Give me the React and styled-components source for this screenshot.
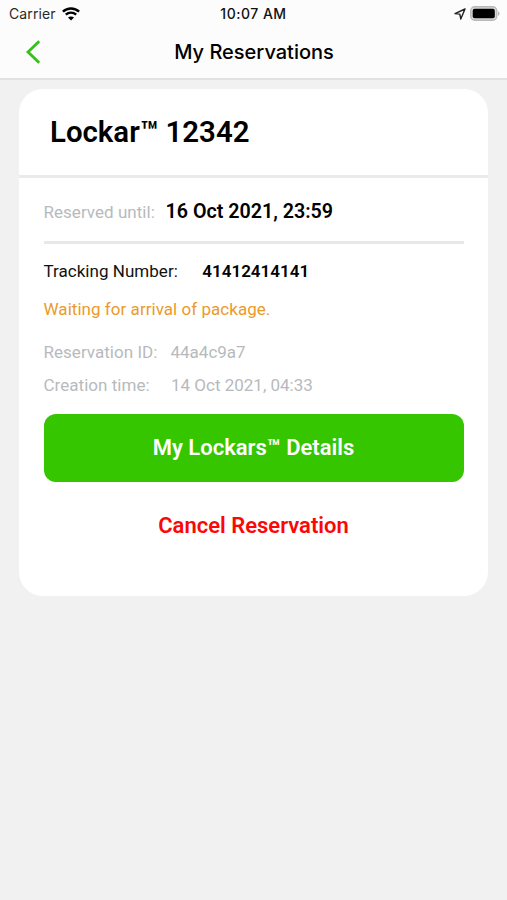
import styled, { createGlobalStyle } from 'styled-components'
import React from 'react'

const GlobalStyle = createGlobalStyle`
  * {
    box-sizing: border-box;
  }
  body {
    margin: 0;
    background: #f1f1f1;
    font-family: Roboto, "Liberation Sans", sans-serif;
    color: #000;
  }
`

const Screen = styled.div`
  min-height: 900px;
  background: #f1f1f1;
`

const TopArea = styled.header`
  height: 80px;
  background: #fcfcfc;
  border-bottom: 2px solid #e2e2e2;
  font-family: Inter, "Liberation Sans", sans-serif;
`

const StatusBar = styled.div`
  display: grid;
  grid-template-columns: 1fr auto 1fr;
  align-items: center;
  height: 26px;
  padding: 1px 7px 0 9px;
`

const Carrier = styled.div`
  display: flex;
  align-items: center;
  gap: 6px;
  font-size: 14px;
  letter-spacing: 0.1px;
  color: #2a2a2a;
`

const Clock = styled.div`
  margin-right: 2px;
  font-size: 14px;
  font-weight: 500;
  letter-spacing: 0.5px;
  color: #111;
`

const StatusIcons = styled.div`
  display: flex;
  justify-content: flex-end;
  align-items: center;
  gap: 4px;
`

const NavBar = styled.div`
  display: grid;
  grid-template-columns: 60px 1fr 60px;
  align-items: center;
  height: 52px;
`

const BackButton = styled.button`
  display: flex;
  padding: 0 0 0 25px;
  border: 0;
  background: transparent;
  cursor: pointer;
`

const NavTitle = styled.h1`
  margin: 0;
  padding-left: 1px;
  font-size: 20px;
  line-height: 24px;
  font-weight: 500;
  text-align: center;
`

const Card = styled.section`
  margin: 9px 19px 0;
  height: 507px;
  border-radius: 24px;
  background: #fff;
`

const CardHeader = styled.div`
  display: flex;
  align-items: center;
  height: 89px;
  padding: 0 31px;
  border-bottom: 3px solid #e8eaeb;
`

const CardTitle = styled.h2`
  margin: 0;
  font-size: 29.4px;
  line-height: 36px;
  font-weight: 600;
`

const CardBody = styled.div`
  padding: 0 24.5px;
`

const Row = styled.div`
  display: flex;
  align-items: center;
  height: ${({ $height }) => $height}px;
`

const ReservedRow = styled(Row)`
  padding-top: 4px;
  border-bottom: 3px solid #e6e9eb;
`

const Meta = styled.div`
  padding: 11px 0 12.5px;
`

const Label = styled.span`
  width: ${({ $width }) => $width}px;
  font-size: 17px;
  white-space: nowrap;
  letter-spacing: 0.03px;
  color: ${({ $muted }) => $muted ? '#b7babd' : '#111'};
`

const Value = styled.span`
  font-size: 17px;
  font-weight: ${({ $weight }) => $weight || 400};
  white-space: nowrap;
  color: ${({ $muted }) => $muted ? '#b7babd' : '#000'};
`

const DateValue = styled(Value)`
  padding-top: 1px;
  font-size: 19.7px;
  line-height: 24px;
`

const Notice = styled.p`
  margin: 0;
  height: 28px;
  font-size: 17px;
  line-height: 24px;
  letter-spacing: 0.04px;
  color: #eb9a2b;
`

const Button = styled.button`
  display: block;
  width: 100%;
  height: 68px;
  margin: 0;
  padding: 0;
  border: 0;
  border-radius: 12px;
  font-family: inherit;
  font-size: 22px;
  font-weight: 600;
  cursor: pointer;
  color: #fff;
  background: #35c600;
`

const TextButton = styled(Button)`
  margin-top: 10px;
  color: #fc0606;
  background: transparent;
`

function WifiIcon() {
  return (
    <svg width='18' height='14' viewBox='0 0 18 14' fill='none' stroke='#000'>
      <path d='M0.9 4.6C5.4 0.3 12.6 0.3 17.1 4.6' strokeWidth='2.5' />
      <path d='M3.8 7.7C6.7 5 11.3 5 14.2 7.7' strokeWidth='2.3' />
      <path d='M9 13.5L6 10.5C7.6 9 10.4 9 12 10.5Z' fill='#000' stroke='none' />
    </svg>
  )
}

function LocationIcon() {
  return (
    <svg width='12' height='12' viewBox='0 0 12 12' fill='none' stroke='#222' strokeWidth='1.4' strokeLinejoin='round'>
      <path d='M11 1L1 5.6L5.8 6.1L6.8 11Z' />
    </svg>
  )
}

function BatteryIcon() {
  return (
    <svg width='30' height='15' viewBox='0 0 30 15'>
      <rect x='0.75' y='0.75' width='26' height='13.5' rx='4' fill='#d8d8d8' stroke='#b8b8b8' strokeWidth='1.4' />
      <rect x='2.7' y='2.7' width='22.1' height='9.6' rx='2' fill='#000' />
      <path d='M28 5.2C30 6 30 9 28 9.8Z' fill='#b5b5b5' />
    </svg>
  )
}

function BackIcon() {
  return (
    <svg width='16' height='24' viewBox='0 0 16 24' fill='none' stroke='#35c01a' strokeWidth='2.8'>
      <path d='M14.2 1.2L3 12L14.2 22.8' />
    </svg>
  )
}

export default function App() {
  return (
    <Screen>
      <GlobalStyle />
      <TopArea>
        <StatusBar>
          <Carrier>
            Carrier
            <WifiIcon />
          </Carrier>
          <Clock>10:07 AM</Clock>
          <StatusIcons>
            <LocationIcon />
            <BatteryIcon />
          </StatusIcons>
        </StatusBar>
        <NavBar>
          <BackButton aria-label='Back'>
            <BackIcon />
          </BackButton>
          <NavTitle>My Reservations</NavTitle>
        </NavBar>
      </TopArea>
      <Card>
        <CardHeader>
          <CardTitle>Lockar™ 12342</CardTitle>
        </CardHeader>
        <CardBody>
          <ReservedRow $height={66}>
            <Label $width={122} $muted>Reserved until:</Label>
            <DateValue $weight={600}>16 Oct 2021, 23:59</DateValue>
          </ReservedRow>
          <Row $height={53}>
            <Label $width={158.8}>Tracking Number:</Label>
            <Value $weight={600}>41412414141</Value>
          </Row>
          <Notice>Waiting for arrival of package.</Notice>
          <Meta>
            <Row $height={32.5}>
              <Label $width={127} $muted>Reservation ID:</Label>
              <Value $muted>44a4c9a7</Value>
            </Row>
            <Row $height={32.5}>
              <Label $width={127.5} $muted>Creation time:</Label>
              <Value $muted>14 Oct 2021, 04:33</Value>
            </Row>
          </Meta>
          <Button>My Lockars™ Details</Button>
          <TextButton>Cancel Reservation</TextButton>
        </CardBody>
      </Card>
    </Screen>
  )
}
